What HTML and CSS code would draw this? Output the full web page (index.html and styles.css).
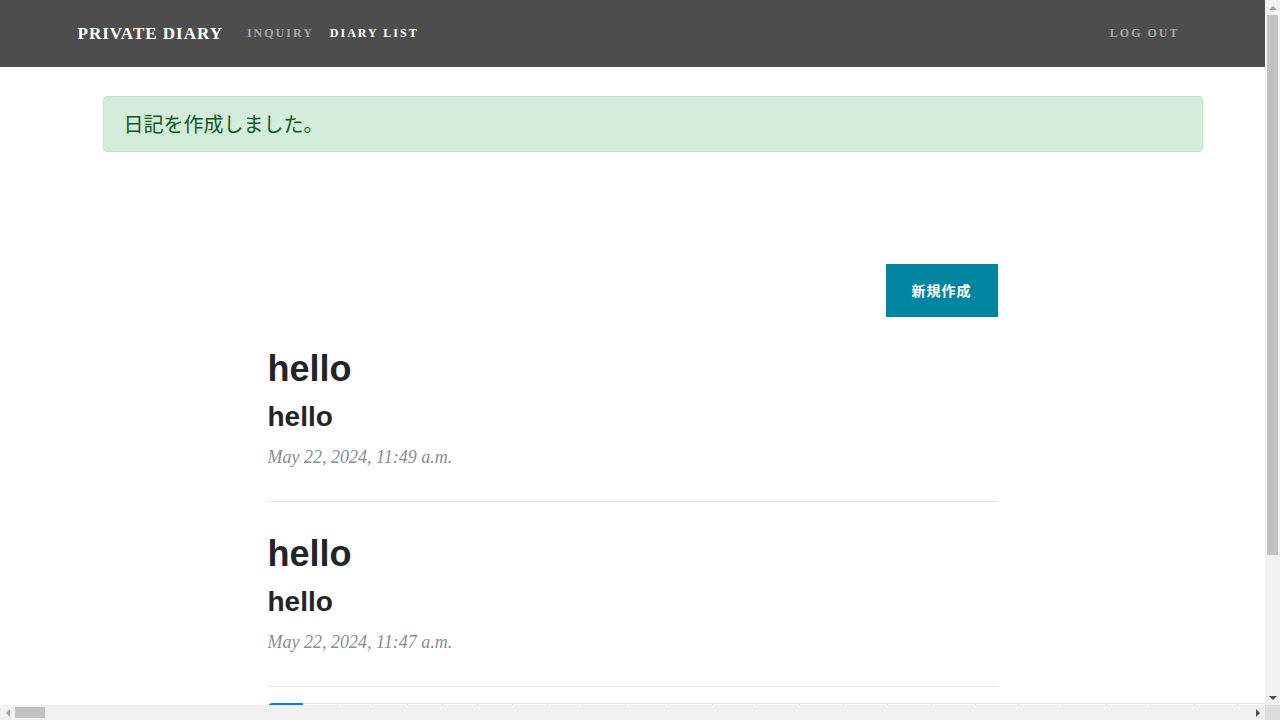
FILE: index.html
```html
<!DOCTYPE html>
<html lang="ja">
<head>
<meta charset="utf-8">
<title>Private Diary</title>
<link rel="stylesheet" href="styles.css">
</head>
<body>
<div class="screen">
<div class="viewport">
<nav class="navbar">
  <div class="container nav-inner">
    <a class="brand" href="#">Private Diary</a>
    <ul class="nav-list">
      <li><a class="nav-link" href="#">Inquiry</a></li>
      <li><a class="nav-link active" href="#">Diary List</a></li>
    </ul>
    <ul class="nav-list nav-right">
      <li><a class="nav-link" href="#">Log Out</a></li>
    </ul>
  </div>
</nav>

<div class="container">
  <ul class="messages">
    <li class="alert">日記を作成しました。</li>
  </ul>
</div>

<div class="container">
  <div class="column">
    <div class="toolbar">
      <a class="btn" href="#">新規作成</a>
    </div>

    <div class="post-preview">
      <a class="post-link" href="#">
        <h2 class="post-title">hello</h2>
        <h3 class="post-subtitle">hello</h3>
      </a>
      <p class="post-meta">May 22, 2024, 11:49 a.m.</p>
    </div>
    <hr class="divider">

    <div class="post-preview">
      <a class="post-link" href="#">
        <h2 class="post-title">hello</h2>
        <h3 class="post-subtitle">hello</h3>
      </a>
      <p class="post-meta">May 22, 2024, 11:47 a.m.</p>
    </div>
    <hr class="divider">

    <ul class="pagination">
      <li class="page-item active"><a class="page-link" href="#">1</a></li>
      <li class="page-item"><a class="page-link" href="#">2</a></li>
      <li class="page-item"><a class="page-link" href="#">3</a></li>
      <li class="page-item"><a class="page-link" href="#">4</a></li>
      <li class="page-item"><a class="page-link" href="#">5</a></li>
      <li class="page-item"><a class="page-link" href="#">6</a></li>
      <li class="page-item"><a class="page-link" href="#">7</a></li>
      <li class="page-item"><a class="page-link" href="#">8</a></li>
      <li class="page-item"><a class="page-link" href="#">9</a></li>
      <li class="page-item"><a class="page-link" href="#">10</a></li>
      <li class="page-item"><a class="page-link" href="#">11</a></li>
      <li class="page-item"><a class="page-link" href="#">12</a></li>
      <li class="page-item"><a class="page-link" href="#">13</a></li>
      <li class="page-item"><a class="page-link" href="#">14</a></li>
      <li class="page-item"><a class="page-link" href="#">15</a></li>
      <li class="page-item"><a class="page-link" href="#">16</a></li>
      <li class="page-item"><a class="page-link" href="#">17</a></li>
      <li class="page-item"><a class="page-link" href="#">18</a></li>
      <li class="page-item"><a class="page-link" href="#">19</a></li>
      <li class="page-item"><a class="page-link" href="#">20</a></li>
      <li class="page-item"><a class="page-link" href="#">21</a></li>
      <li class="page-item"><a class="page-link" href="#">22</a></li>
      <li class="page-item"><a class="page-link" href="#">23</a></li>
      <li class="page-item"><a class="page-link" href="#">24</a></li>
      <li class="page-item"><a class="page-link" href="#">25</a></li>
      <li class="page-item"><a class="page-link" href="#">26</a></li>
      <li class="page-item"><a class="page-link" href="#">27</a></li>
      <li class="page-item"><a class="page-link" href="#">28</a></li>
    </ul>
  </div>
</div>
</div>

<div class="vscroll">
  <div class="sb-btn"><span class="arrow arrow-up"></span></div>
  <div class="sb-track"><div class="sb-thumb-v"></div></div>
  <div class="sb-btn"><span class="arrow arrow-down"></span></div>
</div>
<div class="hscroll">
  <div class="sb-btn"><span class="arrow arrow-left"></span></div>
  <div class="sb-track"><div class="sb-thumb-h"></div></div>
  <div class="sb-btn"><span class="arrow arrow-right"></span></div>
</div>
<div class="sb-corner"></div>
</div>
</body>
</html>
```

FILE: styles.css
```css
html, body {
  margin: 0;
  padding: 0;
  overflow: hidden;
}
body {
  font-family: "Liberation Serif", "Times New Roman", serif;
  font-size: 16px;
  color: #212529;
  background: #fff;
}
a { text-decoration: none; }

.screen {
  width: 1280px;
  height: 720px;
  display: grid;
  grid-template-columns: 1265px 15px;
  grid-template-rows: 705px 15px;
}
.viewport {
  overflow: hidden;
  background: #fff;
}

.container {
  width: 1140px;
  margin: 0 auto;
  box-sizing: border-box;
}

/* navbar */
.navbar {
  background: #4d4d4d;
  height: 67px;
}
.nav-inner {
  height: 66px;
  padding: 0 15px;
  display: flex;
  align-items: center;
}
.brand {
  font-family: "Liberation Serif", "Times New Roman", serif;
  font-weight: 700;
  font-size: 17px;
  letter-spacing: 1px;
  text-transform: uppercase;
  color: #fff;
  margin-right: 16px;
  line-height: 1;
}
.nav-list {
  list-style: none;
  margin: 0;
  padding: 0;
  display: flex;
}
.nav-right { margin-left: auto; }
.nav-link {
  display: block;
  padding: 8px;
  font-family: "Liberation Serif", "Times New Roman", serif;
  font-weight: 700;
  font-size: 12px;
  letter-spacing: 2px;
  text-transform: uppercase;
  color: rgba(255, 255, 255, 0.5);
  line-height: 1;
}
.nav-link.active { color: #fff; }

/* messages */
.messages {
  list-style: none;
  margin: 29px 0 0;
  padding: 0 0 0 40px;
}
.alert {
  padding: 12px 20px;
  border: 1px solid #c3e6cb;
  border-radius: 4px;
  background: #d4edda;
  color: #155724;
  font-family: "Noto Sans CJK JP", "Noto Sans", sans-serif;
  font-size: 20px;
  line-height: 30px;
}

/* content column */
.column {
  width: 730px;
  margin: 0 auto;
}
.toolbar {
  margin-top: 112px;
  display: flex;
  justify-content: flex-end;
}
.btn {
  display: block;
  padding: 15px 25px;
  border: 1px solid #0085a1;
  background: #0085a1;
  color: #fff;
  font-family: "Noto Sans CJK JP", sans-serif;
  font-weight: 700;
  font-size: 14px;
  line-height: 21px;
  letter-spacing: 1px;
}

.post-link { color: #212529; display: block; }
.post-title {
  font-family: "Liberation Sans", Arial, sans-serif;
  font-weight: 700;
  font-size: 36px;
  line-height: 1.2;
  margin: 30px 0 10px;
}
.post-subtitle {
  font-family: "Liberation Sans", Arial, sans-serif;
  font-weight: 700;
  font-size: 28px;
  line-height: 1.2;
  margin: 0 0 10px;
}
.post-meta {
  font-family: "Liberation Serif", "Times New Roman", serif;
  font-style: italic;
  font-size: 18px;
  line-height: 1.5;
  color: #868e96;
  margin: 0;
}
.divider {
  border: 0;
  border-top: 1px solid #e5e5e5;
  margin: 30px 0 0;
}

/* pagination */
.pagination {
  display: flex;
  list-style: none;
  margin: 16px 0 16px;
  padding: 0;
}
.page-link {
  display: block;
  padding: 8px 12.5px;
  margin-left: -1px;
  border: 1px solid #dee2e6;
  background: #fff;
  color: #007bff;
  font-family: "Liberation Sans", Arial, sans-serif;
  font-size: 16px;
  line-height: 20px;
}
.page-item:first-child .page-link {
  margin-left: 0;
  border-radius: 4px 0 0 4px;
}
.page-item.active .page-link {
  background: #007bff;
  border-color: #007bff;
  color: #fff;
  position: relative;
  z-index: 1;
}

/* scrollbars */
.vscroll, .hscroll {
  background: #f1f1f1;
  display: flex;
}
.vscroll { flex-direction: column; }
.sb-btn {
  flex: 0 0 15px;
  width: 15px;
  height: 15px;
  display: flex;
  align-items: center;
  justify-content: center;
}
.sb-track {
  flex: 1;
  display: flex;
}
.vscroll .sb-track { flex-direction: column; align-items: center; }
.hscroll .sb-track { align-items: center; }
.sb-thumb-v {
  width: 11px;
  height: 540px;
  background: #c1c1c1;
}
.sb-thumb-h {
  width: 30px;
  height: 11px;
  background: #c1c1c1;
}
.sb-corner { background: #dcdcdc; }
.arrow {
  width: 0;
  height: 0;
  display: block;
}
.arrow-up {
  border-left: 4px solid transparent;
  border-right: 4px solid transparent;
  border-bottom: 4px solid #a3a3a3;
}
.arrow-down {
  border-left: 4px solid transparent;
  border-right: 4px solid transparent;
  border-top: 4px solid #505050;
}
.arrow-left {
  border-top: 4px solid transparent;
  border-bottom: 4px solid transparent;
  border-right: 4px solid #a3a3a3;
}
.arrow-right {
  border-top: 4px solid transparent;
  border-bottom: 4px solid transparent;
  border-left: 4px solid #505050;
}
```
